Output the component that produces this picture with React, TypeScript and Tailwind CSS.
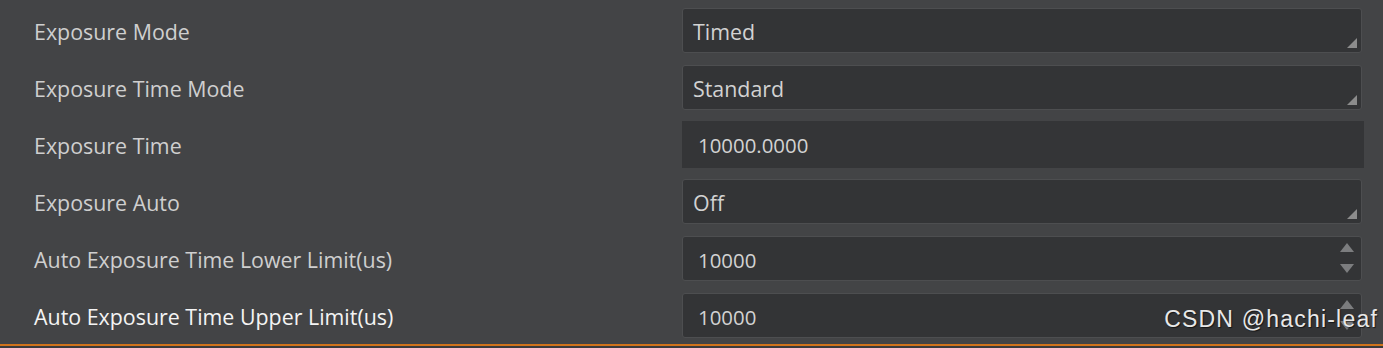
import React from "react";

type Row = { label: string; value: string; kind: "combo" | "readonly" | "spin" };

const ROWS: Row[] = [
  { label: "Exposure Mode", value: "Timed", kind: "combo" },
  { label: "Exposure Time Mode", value: "Standard", kind: "combo" },
  { label: "Exposure Time", value: "10000.0000", kind: "readonly" },
  { label: "Exposure Auto", value: "Off", kind: "combo" },
  { label: "Auto Exposure Time Lower Limit(us)", value: "10000", kind: "spin" },
  { label: "Auto Exposure Time Upper Limit(us)", value: "10000", kind: "spin" },
];

function Field({ row }: { row: Row }) {
  if (row.kind === "readonly") {
    return (
      <div className="flex h-[47px] w-[682px] items-center bg-[#343537] pl-[16px] pt-[2px] text-[20.4px] text-[#d2d2d2]">
        {row.value}
      </div>
    );
  }
  return (
    <div
      className={`relative flex h-[45px] w-[680px] items-center rounded-[3px] border border-[#4d4e50] bg-[#333436] pt-[3px] text-[#d2d2d2] ${
        row.kind === "spin" ? "pl-[15px] text-[20.4px]" : "pl-[10px]"
      }`}
    >
      {row.value}
      {row.kind === "combo" && (
        <svg className="absolute bottom-[4px] right-[4px]" width="10" height="10" viewBox="0 0 10 10">
          <polygon points="10,0 10,10 0,10" fill="#8c8c8c" />
        </svg>
      )}
      {row.kind === "spin" && (
        <div className="absolute right-[7px] top-[6px] flex flex-col gap-[12px]">
          <svg width="14" height="9" viewBox="0 0 14 9">
            <polygon points="7,0 14,9 0,9" fill="#7c7d7f" />
          </svg>
          <svg width="14" height="9" viewBox="0 0 14 9">
            <polygon points="0,0 14,0 7,9" fill="#7c7d7f" />
          </svg>
        </div>
      )}
    </div>
  );
}

export default function App() {
  return (
    <div
      className="relative h-[348px] w-[1383px] overflow-hidden bg-[#434446] text-[21.4px]"
      style={{ fontFamily: "'Open Sans', 'Noto Sans', sans-serif" }}
    >
      <div className="flex flex-col pt-[2px]">
        {ROWS.map((row, i) => (
          <div key={row.label} className="flex h-[57px] items-center">
            <div
              className={`w-[682px] pl-[34px] pt-[3px] ${
                i === ROWS.length - 1 ? "text-[#f4f4f4]" : "text-[#cfcfcf]"
              }`}
            >
              {row.label}
            </div>
            <Field row={row} />
          </div>
        ))}
      </div>
      <div className="h-[2px] bg-[#d0731c]" />
      <div className="h-[2px] bg-[#3a3b3d]" />
      <div
        className="absolute right-[5px] top-[302px] text-[23px] tracking-[1.2px] text-[#e8e8e8]"
        style={{ fontFamily: "'Liberation Sans', Arial, sans-serif", textShadow: "1px 1px 1px rgba(0,0,0,0.6)" }}
      >
        CSDN @hachi-leaf
      </div>
    </div>
  );
}
